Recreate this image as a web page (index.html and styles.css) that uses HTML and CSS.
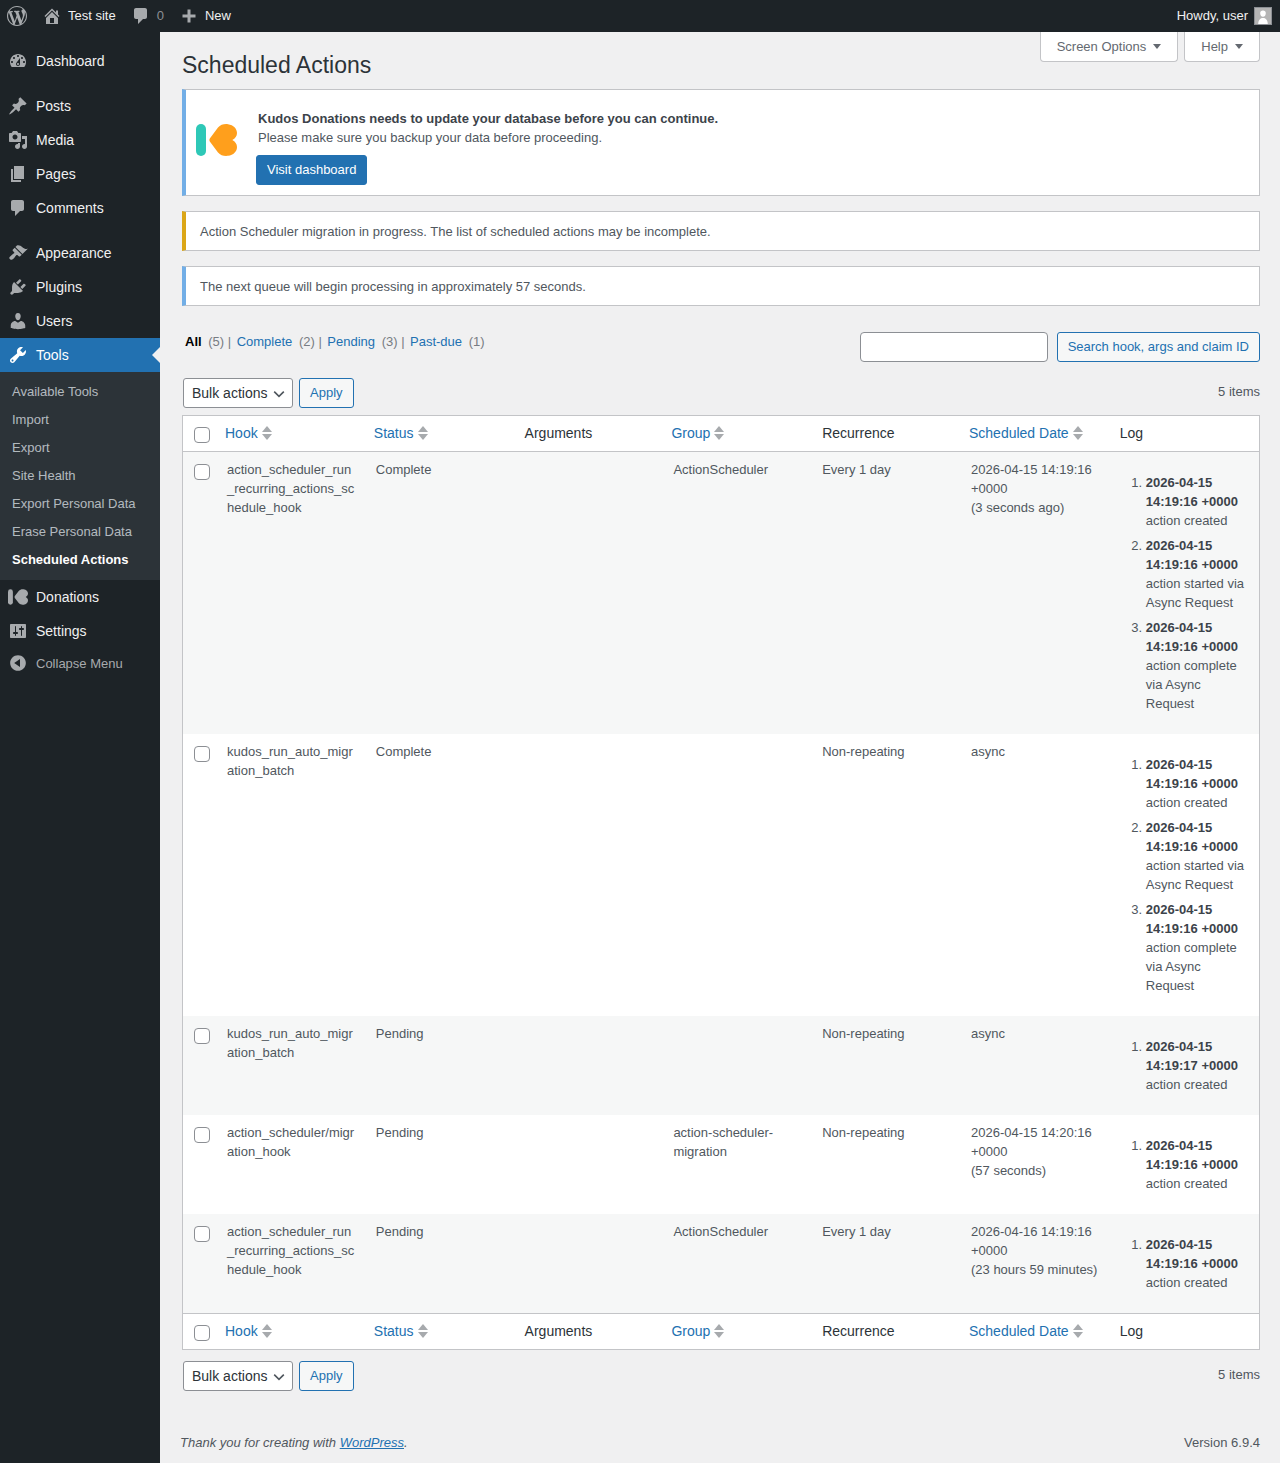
FILE: index.html
```html
<!DOCTYPE html>
<html lang="en">
<head>
    <meta charset="UTF-8">
    <title>Scheduled Actions</title>
    <link rel="stylesheet" href="styles.css">
</head>
<body>
    <svg class="sprites" width="0" height="0">
        <symbol id="i-wp" viewBox="0 0 20 20"><path d="M20 10c0-5.51-4.49-10-10-10C4.48 0 0 4.49 0 10c0 5.52 4.48 10 10 10 5.51 0 10-4.48 10-10zM7.78 15.37L4.37 6.22c.55-.02 1.17-.08 1.17-.08.5-.06.44-1.13-.06-1.11 0 0-1.45.11-2.37.11-.18 0-.37 0-.58-.01C4.12 2.69 6.87 1.11 10 1.11c2.33 0 4.45.87 6.05 2.34-.68-.11-1.65.39-1.65 1.58 0 .74.45 1.36.9 2.1.35.61.55 1.36.55 2.46 0 1.49-1.4 5-1.4 5l-3.03-8.37c.54-.02.82-.17.82-.17.5-.05.44-1.25-.06-1.22 0 0-1.44.12-2.38.12-.87 0-2.33-.12-2.33-.12-.5-.03-.56 1.2-.06 1.22l.92.08 1.26 3.41zM17.41 10c.24-.64.74-1.87.43-4.25.7 1.29 1.05 2.71 1.05 4.25 0 3.29-1.73 6.24-4.4 7.78.97-2.59 1.94-5.2 2.92-7.78zM6.1 18.09C3.12 16.65 1.11 13.53 1.11 10c0-1.3.23-2.48.72-3.59C3.25 10.3 4.67 14.2 6.1 18.09zm4.03-6.63l2.58 6.98c-.86.29-1.76.45-2.71.45-.79 0-1.57-.11-2.29-.33.81-2.38 1.62-4.74 2.42-7.1z"/></symbol>
        <symbol id="i-home" viewBox="0 0 20 20"><path d="M16 8.5l1.53 1.53-1.06 1.06L10 4.62l-6.47 6.47-1.06-1.06L10 2.5l4 4v-2h2v4zm-6-2.46l6 5.99V18H4v-5.97zM12 17v-5H8v5h4z"/></symbol>
        <symbol id="i-comment" viewBox="0 0 20 20"><path d="M5 2h9c1.1 0 2 .9 2 2v7c0 1.1-.9 2-2 2h-2l-5 5v-5H5c-1.1 0-2-.9-2-2V4c0-1.1.9-2 2-2z"/></symbol>
        <symbol id="i-plus" viewBox="0 0 20 20"><path d="M16.500 8.500v3h-5v5h-3v-5h-5v-3h5v-5h3v5z"/></symbol>
        <symbol id="i-dashboard" viewBox="0 0 20 20"><path fill-rule="evenodd" d="M3.76 16h12.48c1.1-1.37 1.76-3.11 1.76-5 0-4.42-3.58-8-8-8s-8 3.58-8 8c0 1.89.66 3.63 1.76 5zM10 4c.55 0 1 .45 1 1s-.45 1-1 1-1-.45-1-1 .45-1 1-1zM6 6c.55 0 1 .45 1 1s-.45 1-1 1-1-.45-1-1 .45-1 1-1zm8 0c.55 0 1 .45 1 1s-.45 1-1 1-1-.45-1-1 .45-1 1-1zm-5.37 5.55L12 7v6c0 1.1-.9 2-2 2s-2-.9-2-2c0-.57.24-1.08.63-1.45zM4 10c.55 0 1 .45 1 1s-.45 1-1 1-1-.45-1-1 .45-1 1-1zm12 0c.55 0 1 .45 1 1s-.45 1-1 1-1-.45-1-1 .45-1 1-1zm-5 3c0-.55-.45-1-1-1s-1 .45-1 1 .45 1 1 1 1-.45 1-1z"/></symbol>
        <symbol id="i-post" viewBox="0 0 20 20"><path d="M10.44 3.02l1.82-1.82 6.36 6.35-1.83 1.82c-1.05-.68-2.48-.57-3.41.36l-.75.75c-.92.93-1.04 2.35-.35 3.41l-1.83 1.82-2.41-2.41-2.8 2.79c-.42.42-3.38 2.71-3.8 2.29s1.86-3.39 2.28-3.81l2.79-2.79L4.1 9.36l1.83-1.82c1.05.69 2.48.57 3.4-.36l.75-.75c.93-.92 1.05-2.35.36-3.41z"/></symbol>
        <symbol id="i-media" viewBox="0 0 20 20"><path fill-rule="evenodd" d="M13 11V4c0-.55-.45-1-1-1h-1.67L9 1H5L3.67 3H2c-.55 0-1 .45-1 1v7c0 .55.45 1 1 1h10c.55 0 1-.45 1-1zM7 4.5c1.38 0 2.5 1.12 2.5 2.5S8.38 9.5 7 9.5 4.5 8.38 4.5 7 5.62 4.5 7 4.5zM14 6h5v10.5c0 1.38-1.12 2.5-2.5 2.5S14 17.88 14 16.5s1.12-2.5 2.5-2.5c.17 0 .34.02.5.05V9h-3V6zm-4 8.05V13h2v3.5c0 1.38-1.12 2.5-2.5 2.5S7 17.88 7 16.5 8.12 14 9.5 14c.17 0 .34.02.5.05z"/></symbol>
        <symbol id="i-page" viewBox="0 0 20 20"><path d="M6 15V2h10v13H6zm-1 1h8v2H3V5h2v11z"/></symbol>
        <symbol id="i-brush" viewBox="0 0 20 20"><path d="M14.48 11.06L7.41 3.99l1.5-1.5c.5-.56 2.3-.47 3.51.32 1.21.8 1.43 1.28 2.91 2.1 1.18.64 2.45 1.26 4.45.85zm-.71.71L6.7 4.7 4.93 6.47c-.39.39-.39 1.02 0 1.41l1.06 1.06c.39.39.39 1.03 0 1.42-.6.6-1.43 1.11-2.21 1.69-.35.26-.7.53-1.01.84C1.43 13.71.96 15.12 1.54 15.71l.88.88c.58.58 2 .11 3.29-1.17.3-.31.57-.66.84-1.01.58-.78 1.09-1.61 1.69-2.21.39-.39 1.03-.39 1.42 0l1.06 1.06c.39.39 1.02.39 1.41 0z"/></symbol>
        <symbol id="i-plugin" viewBox="0 0 20 20"><path d="M13.11 4.36L9.87 7.6 8 5.73l3.24-3.24c.35-.34 1.05-.2 1.56.32.52.51.66 1.21.31 1.55zm-8 1.77l.91-1.12 9.01 9.01-1.19.84c-.71.71-2.63 1.16-3.82 1.16H6.14L4.9 17.26c-.59.59-1.54.59-2.12 0-.59-.58-.59-1.53 0-2.12l1.24-1.24v-3.88c0-1.13.4-3.19 1.09-3.89zm7.26 3.97l3.24-3.24c.34-.35 1.04-.21 1.55.31.52.51.66 1.21.31 1.55l-3.24 3.25z"/></symbol>
        <symbol id="i-users" viewBox="0 0 20 20"><path d="M10 9.25c-2.27 0-2.73-3.44-2.73-3.44C7 4.02 7.82 2 9.97 2c2.16 0 2.98 2.02 2.71 3.81 0 0-.41 3.44-2.68 3.44zm0 2.57L12.72 10c2.39 0 4.52 2.33 4.52 4.53v2.49s-3.65 1.13-7.24 1.13c-3.65 0-7.24-1.13-7.24-1.13v-2.49c0-2.25 1.94-4.48 4.47-4.48z"/></symbol>
        <symbol id="i-tools" viewBox="0 0 20 20"><path d="M16.68 9.77c-1.34 1.34-3.3 1.67-4.95.99l-5.41 6.52c-.99.99-2.59.99-3.58 0s-.99-2.59 0-3.57l6.52-5.42c-.68-1.65-.35-3.61.99-4.95 1.28-1.28 3.12-1.62 4.72-1.06l-2.89 2.89 2.82 2.82 2.86-2.87c.53 1.58.18 3.39-1.08 4.65zM3.81 16.21c.4.39 1.04.39 1.43 0 .4-.4.4-1.04 0-1.43-.39-.4-1.03-.4-1.43 0-.39.39-.39 1.03 0 1.43z"/></symbol>
        <symbol id="i-settings" viewBox="0 0 20 20"><path fill-rule="evenodd" d="M18 16V4c0-.55-.45-1-1-1H3c-.55 0-1 .45-1 1v12c0 .55.45 1 1 1h14c.55 0 1-.45 1-1zM8 11h1c.55 0 1 .45 1 1s-.45 1-1 1H8v1.5c0 .28-.22.5-.5.5s-.5-.22-.5-.5V13H6c-.55 0-1-.45-1-1s.45-1 1-1h1V5.5c0-.28.22-.5.5-.5s.5.22.5.5V11zm5-2h-1c-.55 0-1-.45-1-1s.45-1 1-1h1V5.5c0-.28.22-.5.5-.5s.5.22.5.5V7h1c.55 0 1 .45 1 1s-.45 1-1 1h-1v5.5c0 .28-.22.5-.5.5s-.5-.22-.5-.5V9z"/></symbol>
        <symbol id="i-collapse" viewBox="0 0 20 20"><path fill-rule="evenodd" d="M10 2.16c4.33 0 7.84 3.51 7.84 7.84s-3.51 7.84-7.84 7.84S2.16 14.33 2.16 10 5.67 2.16 10 2.16zm2 11.72V6.12L6.18 9.97z"/></symbol>
        <symbol id="i-kudos" viewBox="0 0 41 32">
            <rect width="10" height="32" rx="5"/>
            <path d="M14 14.2 22 3.6C24.5.8 28-.3 32 .2c5.500.7 9 4.300 9 8.800 0 3-1.800 5.500-4.700 7 2.900 1.500 4.700 4 4.700 7 0 4.500-3.500 8.100-9 8.800-4 .5-7.500-.6-10-3.400L14 17.800c-.8-1.100-.8-2.500 0-3.600z"/>
        </symbol>
    </svg>

    <header class="adminbar">
        <a class="bar-item bar-logo"><svg class="bar-icon"><use href="#i-wp"/></svg></a>
        <a class="bar-item bar-site"><svg class="bar-icon"><use href="#i-home"/></svg>Test site</a>
        <a class="bar-item bar-comments"><svg class="bar-icon"><use href="#i-comment"/></svg><span class="bar-count">0</span></a>
        <a class="bar-item bar-new"><svg class="bar-icon"><use href="#i-plus"/></svg>New</a>
        <a class="bar-item bar-account">Howdy, user
            <span class="avatar"><svg viewBox="0 0 20 20"><path d="M10 11c-2.300 0-3.500-2.200-3.500-4.500S7.800 3 10 3s3.500 1.200 3.500 3.500S12.300 11 10 11zm-6 9c0-4 2-7 4.500-7.500h3C14 13 16 16 16 20z"/></svg></span>
        </a>
    </header>

    <div class="layout">
        <nav class="sidemenu">
            <ul class="menu">
                <li class="menu-item"><svg><use href="#i-dashboard"/></svg>Dashboard</li>
                <li class="menu-item menu-gap"><svg><use href="#i-post"/></svg>Posts</li>
                <li class="menu-item"><svg><use href="#i-media"/></svg>Media</li>
                <li class="menu-item"><svg><use href="#i-page"/></svg>Pages</li>
                <li class="menu-item"><svg><use href="#i-comment"/></svg>Comments</li>
                <li class="menu-item menu-gap"><svg><use href="#i-brush"/></svg>Appearance</li>
                <li class="menu-item"><svg><use href="#i-plugin"/></svg>Plugins</li>
                <li class="menu-item"><svg><use href="#i-users"/></svg>Users</li>
                <li class="menu-item menu-current"><svg><use href="#i-tools"/></svg>Tools</li>
            </ul>
            <ul class="submenu">
                <li>Available Tools</li>
                <li>Import</li>
                <li>Export</li>
                <li>Site Health</li>
                <li>Export Personal Data</li>
                <li>Erase Personal Data</li>
                <li class="submenu-current">Scheduled Actions</li>
            </ul>
            <ul class="menu">
                <li class="menu-item"><svg><use href="#i-kudos"/></svg>Donations</li>
                <li class="menu-item"><svg><use href="#i-settings"/></svg>Settings</li>
                <li class="menu-collapse"><svg><use href="#i-collapse"/></svg>Collapse Menu</li>
            </ul>
        </nav>

        <main class="content">
            <div class="screen-tabs">
                <button class="screen-tab">Screen Options<span class="caret"></span></button>
                <button class="screen-tab">Help<span class="caret"></span></button>
            </div>

            <h1>Scheduled Actions</h1>

            <div class="notice notice-kudos">
                <svg class="kudos-logo" viewBox="0 0 41 32">
                    <rect width="10" height="32" rx="5" fill="#2ec8b7"/>
                    <path fill="#ff9f1c" d="M14 14.2 22 3.6C24.5.8 28-.3 32 .2c5.500.7 9 4.300 9 8.800 0 3-1.800 5.500-4.700 7 2.900 1.500 4.700 4 4.700 7 0 4.500-3.500 8.100-9 8.800-4 .5-7.500-.6-10-3.400L14 17.800c-.8-1.100-.8-2.500 0-3.600z"/>
                </svg>
                <div class="kudos-text">
                    <p><strong>Kudos Donations needs to update your database before you can continue.</strong></p>
                    <p>Please make sure you backup your data before proceeding.</p>
                    <a class="btn btn-primary">Visit dashboard</a>
                </div>
            </div>

            <div class="notice notice-warning">Action Scheduler migration in progress. The list of scheduled actions may be incomplete.</div>
            <div class="notice notice-info">The next queue will begin processing in approximately 57 seconds.</div>

            <div class="filters">
                <ul class="views">
                    <li><strong>All</strong> <span class="count">(5)</span> |</li>
                    <li><a>Complete</a> <span class="count">(2)</span> |</li>
                    <li><a>Pending</a> <span class="count">(3)</span> |</li>
                    <li><a>Past-due</a> <span class="count">(1)</span></li>
                </ul>
                <div class="search">
                    <input type="search" class="search-input">
                    <a class="btn btn-outline">Search hook, args and claim ID</a>
                </div>
            </div>

            <div class="tablenav tablenav-top">
                <select class="bulk"><option>Bulk actions</option></select>
                <a class="btn btn-outline">Apply</a>
                <span class="num-items">5 items</span>
            </div>

            <table class="actions">
                <thead>
                    <tr>
                        <th class="check"><input type="checkbox"></th>
                        <th class="sortable"><a>Hook</a><span class="sort"></span></th>
                        <th class="sortable"><a>Status</a><span class="sort"></span></th>
                        <th>Arguments</th>
                        <th class="sortable"><a>Group</a><span class="sort"></span></th>
                        <th>Recurrence</th>
                        <th class="sortable"><a>Scheduled Date</a><span class="sort"></span></th>
                        <th>Log</th>
                    </tr>
                </thead>
                <tbody>
                    <tr class="alt">
                        <td class="check"><input type="checkbox"></td>
                        <td class="hook">action_scheduler_run_recurring_actions_schedule_hook</td>
                        <td>Complete</td>
                        <td></td>
                        <td>ActionScheduler</td>
                        <td>Every 1 day</td>
                        <td>2026-04-15 14:19:16 +0000<br>(3 seconds ago)</td>
                        <td>
                            <ol class="log">
                                <li><strong>2026-04-15 14:19:16 +0000</strong><br>action created</li>
                                <li><strong>2026-04-15 14:19:16 +0000</strong><br>action started via Async Request</li>
                                <li><strong>2026-04-15 14:19:16 +0000</strong><br>action complete via Async Request</li>
                            </ol>
                        </td>
                    </tr>
                    <tr>
                        <td class="check"><input type="checkbox"></td>
                        <td class="hook">kudos_run_auto_migration_batch</td>
                        <td>Complete</td>
                        <td></td>
                        <td></td>
                        <td>Non-repeating</td>
                        <td>async</td>
                        <td>
                            <ol class="log">
                                <li><strong>2026-04-15 14:19:16 +0000</strong><br>action created</li>
                                <li><strong>2026-04-15 14:19:16 +0000</strong><br>action started via Async Request</li>
                                <li><strong>2026-04-15 14:19:16 +0000</strong><br>action complete via Async Request</li>
                            </ol>
                        </td>
                    </tr>
                    <tr class="alt">
                        <td class="check"><input type="checkbox"></td>
                        <td class="hook">kudos_run_auto_migration_batch</td>
                        <td>Pending</td>
                        <td></td>
                        <td></td>
                        <td>Non-repeating</td>
                        <td>async</td>
                        <td>
                            <ol class="log">
                                <li><strong>2026-04-15 14:19:17 +0000</strong><br>action created</li>
                            </ol>
                        </td>
                    </tr>
                    <tr>
                        <td class="check"><input type="checkbox"></td>
                        <td class="hook">action_scheduler/migration_hook</td>
                        <td>Pending</td>
                        <td></td>
                        <td>action-scheduler-migration</td>
                        <td>Non-repeating</td>
                        <td>2026-04-15 14:20:16 +0000<br>(57 seconds)</td>
                        <td>
                            <ol class="log">
                                <li><strong>2026-04-15 14:19:16 +0000</strong><br>action created</li>
                            </ol>
                        </td>
                    </tr>
                    <tr class="alt">
                        <td class="check"><input type="checkbox"></td>
                        <td class="hook">action_scheduler_run_recurring_actions_schedule_hook</td>
                        <td>Pending</td>
                        <td></td>
                        <td>ActionScheduler</td>
                        <td>Every 1 day</td>
                        <td>2026-04-16 14:19:16 +0000<br>(23 hours 59 minutes)</td>
                        <td>
                            <ol class="log">
                                <li><strong>2026-04-15 14:19:16 +0000</strong><br>action created</li>
                            </ol>
                        </td>
                    </tr>
                </tbody>
                <tfoot>
                    <tr>
                        <th class="check"><input type="checkbox"></th>
                        <th class="sortable"><a>Hook</a><span class="sort"></span></th>
                        <th class="sortable"><a>Status</a><span class="sort"></span></th>
                        <th>Arguments</th>
                        <th class="sortable"><a>Group</a><span class="sort"></span></th>
                        <th>Recurrence</th>
                        <th class="sortable"><a>Scheduled Date</a><span class="sort"></span></th>
                        <th>Log</th>
                    </tr>
                </tfoot>
            </table>

            <div class="tablenav tablenav-bottom">
                <select class="bulk"><option>Bulk actions</option></select>
                <a class="btn btn-outline">Apply</a>
                <span class="num-items">5 items</span>
            </div>

            <footer class="page-footer">
                <span class="thanks">Thank you for creating with <a>WordPress</a>.</span>
                <span>Version 6.9.4</span>
            </footer>
        </main>
    </div>
</body>
</html>
```

FILE: styles.css
```css
* {
    box-sizing: border-box;
}

html, body {
    margin: 0;
    padding: 0;
}

body {
    font-family: "Liberation Sans", Arial, sans-serif;
    font-size: 13px;
    line-height: 19px;
    color: #50575e;
    background: #f0f0f1;
}

.sprites {
    position: absolute;
}

a {
    color: #2271b1;
}

ul, ol, p, h1 {
    margin: 0;
    padding: 0;
}

ul {
    list-style: none;
}

/* admin bar */
.adminbar {
    display: flex;
    height: 32px;
    background: #1d2327;
    color: #f0f0f1;
}

.bar-item {
    display: flex;
    align-items: flex-start;
    height: 32px;
    line-height: 31px;
    color: #f0f0f1;
}

.bar-icon {
    width: 20px;
    height: 20px;
    margin-top: 6px;
    fill: #a7aaad;
}

.bar-logo {
    margin-left: 7px;
}

.bar-site {
    margin-left: 15px;
}

.bar-site .bar-icon {
    margin-right: 6px;
}

.bar-comments {
    margin-left: 15px;
}

.bar-count {
    margin-left: 6px;
    color: #8c8f94;
}

.bar-new {
    margin-left: 15px;
}

.bar-new .bar-icon {
    margin-right: 6px;
}

.bar-account {
    margin-left: auto;
    margin-right: 8px;
}

.avatar {
    display: block;
    width: 18px;
    height: 18px;
    margin: 7px 0 0 6px;
    border: 1px solid #8c8f94;
    background: #b5b5b5;
    overflow: hidden;
}

.avatar svg {
    display: block;
    width: 16px;
    height: 16px;
    fill: #fff;
}

/* side menu */
.layout {
    display: flex;
    min-height: 1431px;
}

.sidemenu {
    flex: 0 0 160px;
    padding-top: 12px;
    background: #1d2327;
    color: #f0f0f1;
    font-size: 14px;
}

.menu-item {
    position: relative;
    display: flex;
    align-items: center;
    height: 34px;
}

.menu-item svg,
.menu-collapse svg {
    flex: none;
    width: 20px;
    height: 20px;
    margin: 0 8px;
    fill: #a7aaad;
}

.menu-gap {
    margin-top: 11px;
}

.menu-current {
    background: #2271b1;
    color: #fff;
}

.menu-current svg {
    fill: #fff;
}

.menu-current::after {
    content: "";
    position: absolute;
    right: 0;
    top: 9px;
    border: 8px solid transparent;
    border-left-width: 0;
    border-right-color: #f0f0f1;
}

.submenu {
    padding: 6px 0;
    background: #2c3338;
    font-size: 13px;
    color: rgba(240, 246, 252, 0.7);
}

.submenu li {
    height: 28px;
    padding: 5px 12px;
    line-height: 18px;
}

.submenu .submenu-current {
    color: #fff;
    font-weight: bold;
}

.menu-collapse {
    display: flex;
    align-items: center;
    height: 30px;
    font-size: 13px;
    color: #a7aaad;
}

/* page content */
.content {
    flex: 1;
    min-width: 0;
    padding: 0 20px 0 22px;
}

.screen-tabs {
    float: right;
    display: flex;
    gap: 6px;
}

.screen-tab {
    display: flex;
    align-items: center;
    height: 30px;
    padding: 0 16px;
    border: 1px solid #c3c4c7;
    border-top: none;
    border-radius: 0 0 4px 4px;
    background: #fff;
    font: inherit;
    color: #646970;
}

.caret {
    margin-left: 7px;
    border: 4.5px solid transparent;
    border-top: 5px solid #646970;
    border-bottom: none;
}

h1 {
    padding-top: 18px;
    font-size: 23px;
    font-weight: 400;
    line-height: 30px;
    color: #2c3338;
}

.notice {
    margin-top: 15px;
    padding: 10px 12px 9px 14px;
    border: 1px solid #c3c4c7;
    border-left-width: 4px;
    background: #fff;
}

.notice-kudos {
    display: flex;
    align-items: flex-start;
    height: 107px;
    margin-top: 9px;
    padding: 0 10px;
    border-left-color: #72aee6;
}

.notice-warning {
    border-left-color: #dba617;
}

.notice-info {
    border-left-color: #72aee6;
}

.kudos-logo {
    flex: none;
    width: 41px;
    height: 32px;
    margin: 34px 19px 0 0;
}

.kudos-text {
    padding-top: 19px;
    margin-left: 2px;
}

.kudos-text strong {
    color: #3c434a;
}

.kudos-text .btn {
    margin: 8px 0 0 -2px;
}

.btn {
    display: inline-block;
    height: 30px;
    padding: 0 10px;
    border: 1px solid #2271b1;
    border-radius: 3px;
    line-height: 28px;
    font-size: 13px;
}

.btn-primary {
    background: #2271b1;
    color: #fff;
}

.btn-outline {
    background: #f6f7f7;
    color: #2271b1;
}

.filters {
    display: flex;
    justify-content: space-between;
    align-items: flex-start;
    margin-top: 26px;
}

.views {
    display: flex;
    gap: 5.5px;
    margin-left: 3px;
    color: #787c82;
}

.views strong {
    color: #000;
}

.views .count {
    margin-left: 3px;
}

.search {
    display: flex;
    gap: 9px;
}

.search-input {
    width: 188px;
    height: 30px;
    margin: 0;
    border: 1px solid #8c8f94;
    border-radius: 4px;
    background: #fff;
}

.tablenav {
    display: flex;
    align-items: flex-start;
    gap: 6px;
    height: 30px;
}

.tablenav-top {
    margin-top: 16px;
}

.tablenav-bottom {
    margin-top: 11px;
}

.bulk {
    width: 110px;
    height: 30px;
    margin: 0 0 0 1px;
    padding: 0 24px 0 8px;
    border: 1px solid #8c8f94;
    border-radius: 3px;
    font: 14px/28px "Liberation Sans", Arial, sans-serif;
    color: #2c3338;
    appearance: none;
    background: #fff url("data:image/svg+xml,%3Csvg xmlns='http://www.w3.org/2000/svg' width='20' height='20' viewBox='0 0 20 20'%3E%3Cpath d='M4 7l6 6 6-6' fill='none' stroke='%2350575e' stroke-width='2'/%3E%3C/svg%3E") no-repeat right 5px top 55% / 16px 16px;
}

.num-items {
    margin-left: auto;
    padding-top: 4px;
}

/* table */
.actions {
    width: 100%;
    margin-top: 7px;
    border: 1px solid #c3c4c7;
    border-spacing: 0;
    table-layout: fixed;
    background: #fff;
}

.actions th {
    width: 148.8px;
    padding: 7px 8px 8px 12px;
    font-size: 14px;
    font-weight: 400;
    line-height: 20px;
    text-align: left;
    color: #2c3338;
}

.actions th:last-child {
    width: auto;
}

.actions thead th {
    border-bottom: 1px solid #c3c4c7;
}

.actions tfoot th {
    border-top: 1px solid #c3c4c7;
}

.actions th.sortable {
    padding-left: 10px;
}

.actions th.check {
    width: 32px;
    padding: 11px 0 0 11px;
    vertical-align: top;
}

.actions input[type="checkbox"] {
    display: block;
    width: 16px;
    height: 16px;
    margin: 0;
    border: 1px solid #8c8f94;
    border-radius: 4px;
    background: #fff;
    appearance: none;
}

.actions td {
    padding: 8px 8px 8px 12px;
    vertical-align: top;
    color: #50575e;
}

.actions td.check {
    padding: 12px 0 0 11px;
}

.actions .alt td {
    background: #f6f7f7;
}

.hook {
    overflow-wrap: anywhere;
}

.sort {
    display: inline-block;
    position: relative;
    width: 10px;
    height: 14px;
    margin-left: 4px;
    vertical-align: -2px;
}

.sort::before,
.sort::after {
    content: "";
    position: absolute;
    left: 0;
    border: 5px solid transparent;
}

.sort::before {
    top: 0;
    border-top: none;
    border-bottom: 6px solid #a7aaad;
}

.sort::after {
    bottom: 0;
    border-bottom: none;
    border-top: 6px solid #a7aaad;
}

.log {
    margin: 13px 0;
    padding-left: 26px;
}

.log li {
    margin-bottom: 6px;
}

.log strong {
    color: #3c434a;
}

/* footer */
.page-footer {
    display: flex;
    justify-content: space-between;
    margin-top: 42px;
}

.thanks {
    margin-left: -2px;
    font-style: italic;
}

.thanks a {
    text-decoration: underline;
}
```
